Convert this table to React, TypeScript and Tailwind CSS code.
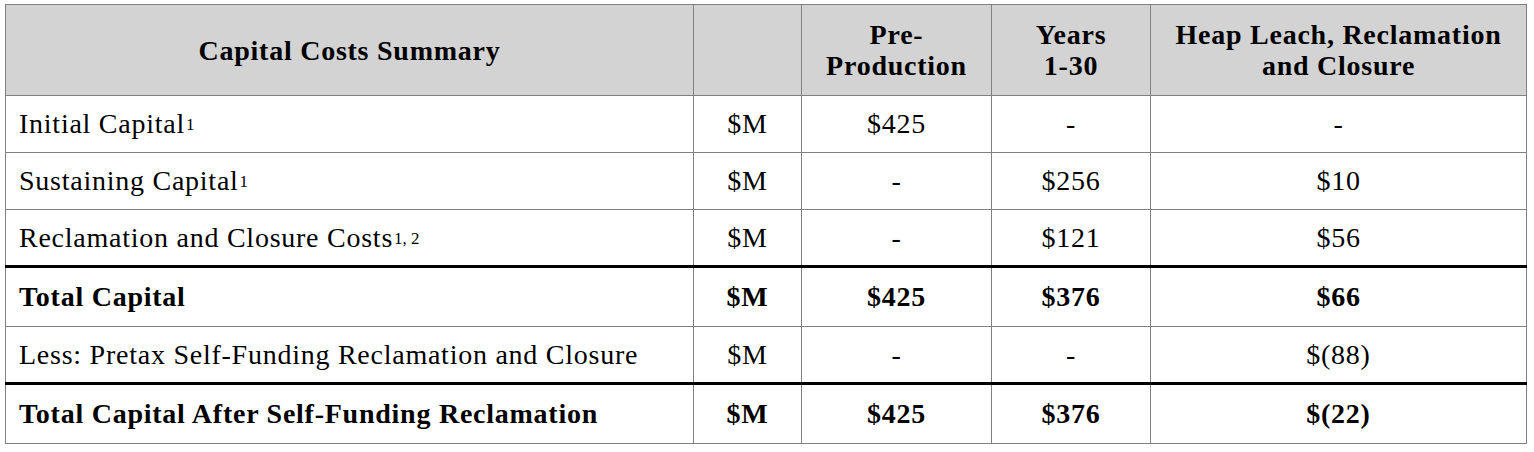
import React from 'react';

type Row = {
  label: React.ReactNode;
  unit: string;
  pre: string;
  years: string;
  heap: string;
  bold?: boolean;
  thickTop?: boolean;
};

const Sup = ({ children }: { children: React.ReactNode }) => (
  <sup className="relative -top-[3px] pl-[1px] text-[17px] tracking-normal">{children}</sup>
);

const rows: Row[] = [
  { label: <>Initial Capital<Sup>1</Sup></>, unit: '$M', pre: '$425', years: '-', heap: '-' },
  { label: <>Sustaining Capital<Sup>1</Sup></>, unit: '$M', pre: '-', years: '$256', heap: '$10' },
  { label: <>Reclamation and Closure Costs<Sup>1, 2</Sup></>, unit: '$M', pre: '-', years: '$121', heap: '$56' },
  { label: 'Total Capital', unit: '$M', pre: '$425', years: '$376', heap: '$66', bold: true, thickTop: true },
  { label: 'Less: Pretax Self-Funding Reclamation and Closure', unit: '$M', pre: '-', years: '-', heap: '$(88)' },
  { label: 'Total Capital After Self-Funding Reclamation', unit: '$M', pre: '$425', years: '$376', heap: '$(22)', bold: true, thickTop: true },
];

const App = () => {
  return (
    <div className="min-h-screen bg-white pl-[5px] pt-[4px] text-black">
      <table className="w-[1521px] table-fixed border-collapse border border-[#808080] font-['Liberation_Serif'] text-[28px] tracking-[0.75px]">
        <colgroup>
          <col className="w-[688px]" />
          <col className="w-[108px]" />
          <col className="w-[190px]" />
          <col className="w-[159px]" />
          <col className="w-[376px]" />
        </colgroup>
        <thead>
          <tr className="h-[91px] bg-[#d3d3d3] font-bold leading-[31px]">
            <th className="border border-[#808080] px-3">Capital Costs Summary</th>
            <th className="border border-[#808080]"></th>
            <th className="border border-[#808080]">Pre-<br />Production</th>
            <th className="border border-[#808080]">Years<br />1-30</th>
            <th className="border border-[#808080]">Heap Leach, Reclamation<br />and Closure</th>
          </tr>
        </thead>
        <tbody>
          {rows.map((r, i) => {
            const thick = r.thickTop ? 'border-t-[3px] border-t-black' : '';
            const cell = `border border-[#808080] text-center ${thick}`;
            return (
              <tr key={i} className={`${r.thickTop ? 'h-[60px]' : 'h-[57px]'} ${r.bold ? 'font-bold' : ''}`}>
                <td className={`border border-[#808080] pl-[13px] text-left ${thick}`}>{r.label}</td>
                <td className={cell}>{r.unit}</td>
                <td className={cell}>{r.pre}</td>
                <td className={cell}>{r.years}</td>
                <td className={cell}>{r.heap}</td>
              </tr>
            );
          })}
        </tbody>
      </table>
    </div>
  );
};

export default App;
